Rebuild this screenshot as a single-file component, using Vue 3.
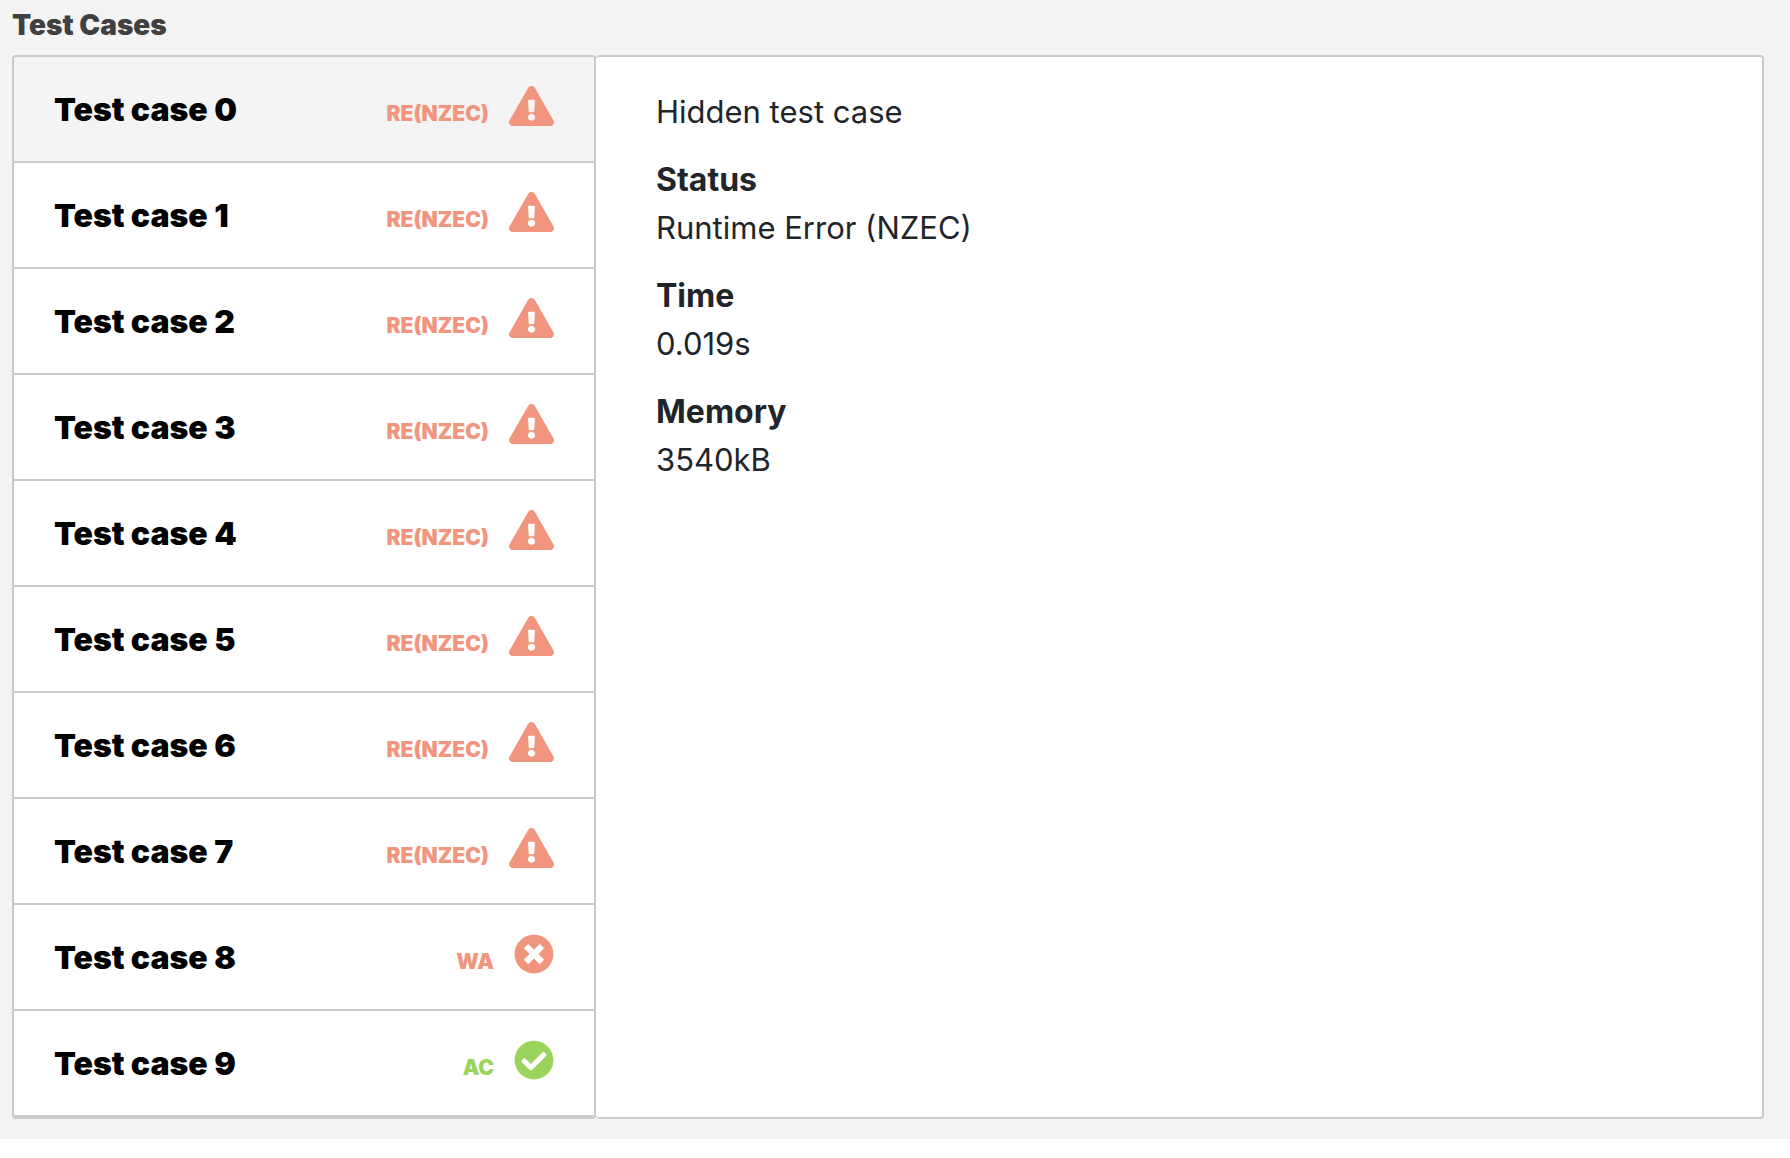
<script setup>
import { ref } from 'vue'

const selected = ref(0)

const cases = Array.from({ length: 10 }, (_, id) => {
  if (id === 8) return { id, code: 'WA', kind: 'wrong' }
  if (id === 9) return { id, code: 'AC', kind: 'accepted' }
  return { id, code: 'RE(NZEC)', kind: 'error' }
})

const details = [
  { label: 'Status', value: 'Runtime Error (NZEC)' },
  { label: 'Time', value: '0.019s' },
  { label: 'Memory', value: '3540kB' }
]

const icons = {
  error: {
    box: '0 0 576 512',
    path: 'M569.517 440.013C587.975 472.007 564.806 512 527.94 512H48.054c-36.937 0-59.999-40.055-41.577-71.987L246.423 23.985c18.467-32.009 64.72-31.951 83.154 0l239.94 416.028zM288 354c-25.405 0-46 20.595-46 46s20.595 46 46 46 46-20.595 46-46-20.595-46-46-46zm-43.673-165.346l7.418 136c.347 6.364 5.609 11.346 11.982 11.346h48.546c6.373 0 11.635-4.982 11.982-11.346l7.418-136c.375-6.874-5.098-12.654-11.982-12.654h-63.383c-6.884 0-12.356 5.78-11.981 12.654z'
  },
  wrong: {
    box: '0 0 512 512',
    path: 'M256 8C119 8 8 119 8 256s111 248 248 248 248-111 248-248S393 8 256 8zm121.6 313.1c4.7 4.7 4.7 12.3 0 17L338 377.6c-4.7 4.7-12.3 4.7-17 0L256 312l-65.1 65.6c-4.7 4.7-12.3 4.7-17 0L134.4 338c-4.7-4.7-4.7-12.3 0-17l65.6-65-65.6-65.1c-4.7-4.7-4.7-12.3 0-17l39.6-39.6c4.7-4.7 12.3-4.7 17 0l65 65.7 65.1-65.6c4.7-4.7 12.3-4.7 17 0l39.6 39.6c4.7 4.7 4.7 12.3 0 17L312 256l65.6 65.1z'
  },
  accepted: {
    box: '0 0 512 512',
    path: 'M504 256c0 136.967-111.033 248-248 248S8 392.967 8 256 119.033 8 256 8s248 111.033 248 248zM227.314 387.314l184-184c6.248-6.248 6.248-16.379 0-22.627l-22.627-22.627c-6.248-6.249-16.379-6.249-22.628 0L216 308.118l-70.059-70.059c-6.248-6.248-16.379-6.248-22.628 0l-22.627 22.627c-6.248 6.248-6.248 16.379 0 22.627l104 104c6.249 6.249 16.379 6.249 22.628.001z'
  }
}
</script>

<template>
  <section class="results">
    <h2 class="heading">Test Cases</h2>
    <div class="panels">
      <div class="case-list">
        <button
          v-for="item in cases"
          :key="item.id"
          type="button"
          class="case"
          :class="{ active: item.id === selected }"
          @click="selected = item.id"
        >
          <span class="name">Test case {{ item.id }}</span>
          <span class="verdict" :class="item.kind">
            <span class="code">{{ item.code }}</span>
            <svg class="icon" :viewBox="icons[item.kind].box" aria-hidden="true">
              <path :d="icons[item.kind].path" />
            </svg>
          </span>
        </button>
      </div>
      <div class="detail">
        <p>Hidden test case</p>
        <dl>
          <div v-for="row in details" :key="row.label" class="entry">
            <dt>{{ row.label }}</dt>
            <dd>{{ row.value }}</dd>
          </div>
        </dl>
      </div>
    </div>
  </section>
</template>

<style>
body {
  background: #fff;
}
</style>

<style scoped>
.results {
  padding: 5px 26px 20px 12px;
  background: #f4f4f4;
  color: #212529;
  font-family: Inter, "Liberation Sans", sans-serif;
  font-size: 31px;
  line-height: 48px;
}

.heading {
  margin: 0 0 10px;
  color: #404040;
  font-size: 28px;
  font-weight: 900;
  line-height: 40px;
}

.panels {
  display: grid;
  grid-template-columns: 1fr 2fr;
}

.case-list {
  border: 2px solid #cacaca;
  border-radius: 4px;
  background: #fff;
  overflow: hidden;
}

.case {
  display: flex;
  align-items: baseline;
  justify-content: space-between;
  width: 100%;
  padding: 29px 40px 27px;
  border: 0;
  border-bottom: 2px solid #cacaca;
  background: #fff;
  color: #000;
  font: inherit;
  text-align: left;
  cursor: pointer;
}

.case.active {
  background: #f4f4f4;
}

.name {
  font-size: 32px;
  font-weight: 900;
}

.verdict {
  white-space: nowrap;
  line-height: 40px;
}

.code {
  margin-right: 20px;
  font-size: 21px;
  font-weight: 900;
}

.icon {
  height: 40px;
  vertical-align: -5px;
  fill: currentColor;
}

.error,
.wrong {
  color: #f1957e;
}

.accepted {
  color: #9bd45c;
}

.detail {
  padding: 31px 60px;
  border: 2px solid #cacaca;
  border-left: 0;
  border-radius: 4px;
  background: #fff;
}

.detail p,
.detail dl,
.detail dd {
  margin: 0;
}

.entry {
  margin-top: 20px;
}

.detail dt {
  font-size: 32px;
  font-weight: 700;
}
</style>
